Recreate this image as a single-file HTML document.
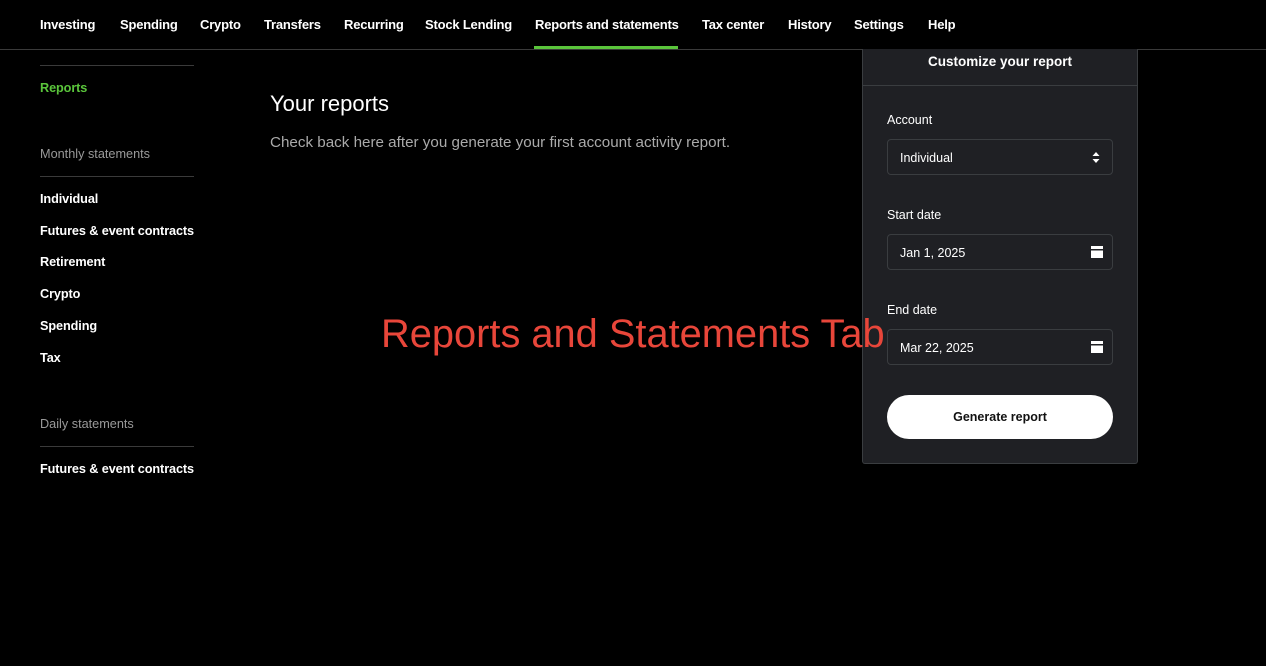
<!DOCTYPE html>
<html><head><meta charset="utf-8"><style>
*{margin:0;padding:0;box-sizing:border-box}
body{width:1266px;height:666px;background:#000;color:#fff;font-family:"Liberation Sans",sans-serif;position:relative;overflow:hidden}
.nav{position:absolute;top:0;left:0;width:1266px;height:50px;border-bottom:1px solid #3a3a3a}
.nav span{position:absolute;top:17px;font-size:13px;font-weight:bold;letter-spacing:-0.2px}
.ul{position:absolute;left:534px;top:46px;width:144px;height:3px;background:#5ac53b}
.side{position:absolute;left:40px;font-size:12.7px;font-weight:bold;letter-spacing:-0.1px}
.sub{position:absolute;left:40px;font-size:12.7px;color:#999}
.hr{position:absolute;left:40px;width:154px;height:1px;background:#3a3a3a}
.panel{position:absolute;left:862px;top:49px;width:276px;height:415px;background:#1f2024;border:1px solid #3a3d40;border-top:none;border-radius:0 0 3px 3px}
.lbl{position:absolute;left:24px;font-size:12.5px;color:#fff}
.inp{position:absolute;left:24px;width:226px;height:36px;border:1px solid #3a3d40;border-radius:4px;font-size:12.5px;padding:11px 12px}
.cal{position:absolute;right:9px;top:11px;width:12px;height:12px}
</style></head><body>
<div class="nav">
<span style="left:40px">Investing</span><span style="left:120px">Spending</span><span style="left:200px">Crypto</span><span style="left:264px">Transfers</span><span style="left:344px">Recurring</span><span style="left:425px">Stock Lending</span><span style="left:535px">Reports and statements</span><span style="left:702px">Tax center</span><span style="left:788px">History</span><span style="left:854px">Settings</span><span style="left:928px">Help</span>
</div>
<div class="ul"></div>
<div class="hr" style="top:65px"></div>
<div class="side" style="top:81px;color:#5ac53b">Reports</div>
<div class="sub" style="top:147px">Monthly statements</div>
<div class="hr" style="top:176px"></div>
<div class="side" style="top:192px">Individual</div>
<div class="side" style="top:224px">Futures &amp; event contracts</div>
<div class="side" style="top:255px">Retirement</div>
<div class="side" style="top:287px">Crypto</div>
<div class="side" style="top:319px">Spending</div>
<div class="side" style="top:351px">Tax</div>
<div class="sub" style="top:417px">Daily statements</div>
<div class="hr" style="top:446px"></div>
<div class="side" style="top:462px">Futures &amp; event contracts</div>
<div style="position:absolute;left:270px;top:91px;font-size:22px">Your reports</div>
<div style="position:absolute;left:270px;top:134px;font-size:15.2px;color:#aaa">Check back here after you generate your first account activity report.</div>
<div class="panel">
<div style="position:absolute;top:5px;left:0;width:100%;text-align:center;font-size:13.5px;font-weight:bold">Customize your report</div>
<div style="position:absolute;top:36px;left:0;width:100%;height:1px;background:#3a3d40"></div>
<div class="lbl" style="top:64px">Account</div>
<div class="inp" style="top:90px">Individual<svg style="position:absolute;right:12px;top:11px" width="8" height="13" viewBox="0 0 8 13"><path d="M4 1L7.5 5H0.5Z M4 12L7.5 8H0.5Z" fill="#fff"/></svg></div>
<div class="lbl" style="top:159px">Start date</div>
<div class="inp" style="top:185px">Jan 1, 2025<svg class="cal" viewBox="0 0 12 12"><rect x="0" y="0" width="12" height="3" fill="#fff"/><rect x="0" y="4.5" width="12" height="7.5" fill="#fff"/></svg></div>
<div class="lbl" style="top:254px">End date</div>
<div class="inp" style="top:280px">Mar 22, 2025<svg class="cal" viewBox="0 0 12 12"><rect x="0" y="0" width="12" height="3" fill="#fff"/><rect x="0" y="4.5" width="12" height="7.5" fill="#fff"/></svg></div>
<div style="position:absolute;left:24px;top:346px;width:226px;height:44px;border-radius:22px;background:#fff;color:#111;font-size:12.5px;font-weight:bold;text-align:center;line-height:44px">Generate report</div>
</div>
<div style="position:absolute;left:381px;top:312px;font-size:39.8px;color:#e8463a;z-index:5;white-space:nowrap">Reports and Statements Tab</div>
</body></html>
